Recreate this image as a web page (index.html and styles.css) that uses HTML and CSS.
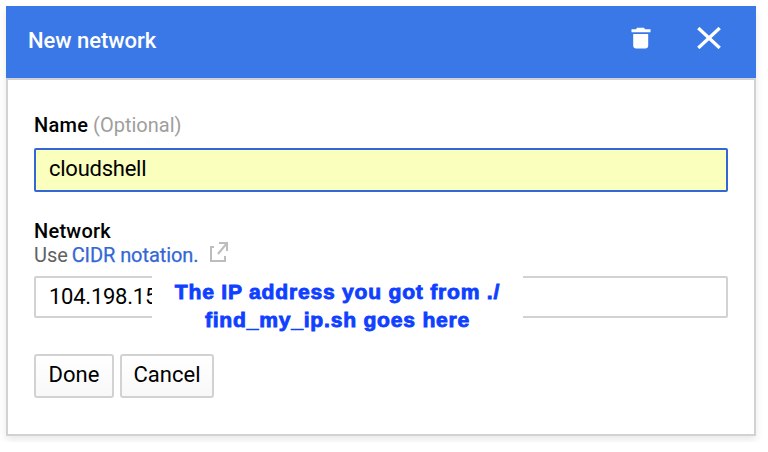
FILE: index.html
```html
<!DOCTYPE html>
<html lang="en">
<head>
<meta charset="utf-8">
<title>New network</title>
<link rel="stylesheet" href="styles.css">
</head>
<body>
<section class="dialog">
  <header class="header">
    <h1 class="title"><span>New network</span></h1>
    <button class="icon-button" aria-label="Delete">
      <svg width="20" height="22" viewBox="0 0 20 22" fill="#fff"><path d="M.5 2.3H5L6 .8h7l1 1.5h5.5v3H.5zM2.2 7h15v11.5a3 3 0 0 1-3 3h-9a3 3 0 0 1-3-3z"/></svg>
    </button>
    <button class="icon-button close" aria-label="Close">
      <svg width="24" height="22" viewBox="0 0 24 22" fill="none" stroke="#fff" stroke-width="3.4"><path d="M1.3 1.1l21.4 19.8M22.7 1.1L1.3 20.9"/></svg>
    </button>
  </header>
  <form class="body">
    <div class="label name-label"><b>Name</b> <span class="optional">(Optional)</span></div>
    <div class="field focused"><span class="value">cloudshell</span></div>
    <div class="label network-label"><b>Network</b></div>
    <div class="hint"><span class="use">Use</span> <a class="link">CIDR notation.</a>
      <svg class="external" width="20" height="21" viewBox="0 0 20 21" fill="none" stroke="#bdbdbd" stroke-width="2"><path d="M5 5H2v14h14v-5M10 1h8v8M18 1L9 12"/></svg>
    </div>
    <div class="field"><span class="ip">104.198.15</span>
      <p class="note"><span class="note-line">The IP address you got from ./</span><span class="note-line">find_my_ip.sh goes here</span></p>
    </div>
    <div class="actions">
      <button type="button" class="button done"><span>Done</span></button>
      <button type="button" class="button cancel"><span>Cancel</span></button>
    </div>
  </form>
</section>
</body>
</html>
```
FILE: styles.css
```css
* { box-sizing: border-box; }
body { margin: 0; padding: 6px; background: #fff; font-family: Roboto, "Liberation Sans", sans-serif; color: #000; }
.dialog { width: 750px; height: 430px; box-shadow: 0 4px 8px rgba(0,0,0,.09); }
.header { height: 72px; padding: 0 35px 0 22px; background: #3b78e7; display: flex; align-items: center; }
.title { flex: 1; margin: 0; color: #fff; font-size: 22px; line-height: 26px; font-weight: 500; padding-bottom: 3px; letter-spacing: -.05px; }
.icon-button { border: 0; padding: 0; background: none; display: flex; margin-bottom: 8px; margin-left: 46px; }
.icon-button svg { display: block; }
.body { height: 358px; border: 2px solid #d2d2d2; background: #fff; padding: 32px 26px 0; }
.label { font-size: 20px; line-height: 26px; white-space: nowrap; }
.label b { font-weight: 500; letter-spacing: .25px; }
.name-label { margin-bottom: 10px; }
.optional { color: #9e9e9e; }
.field { position: relative; height: 42px; border: 2px solid #d2d2d2; border-radius: 2px; padding: 6px 13px; font-size: 22px; line-height: 26px; letter-spacing: -.25px; }
.focused { height: 44px; border-color: #3367d6; background: #faffbd; }
.network-label { margin-top: 26px; }
.hint { display: flex; align-items: center; height: 24px; margin-bottom: 8px; font-size: 20px; line-height: 22px; white-space: nowrap; letter-spacing: -.08px; }
.hint span, .hint a { position: relative; top: -1px; }
.use { color: #616161; margin-right: 4px; }
.link { color: #3367d6; -webkit-text-stroke: .25px #3367d6; }
.external { margin: -7px 0 0 11px; }
.note { position: absolute; left: 116px; top: -3px; width: 371px; height: 66px; margin: 0; padding-top: 3px; background: #fff; color: #0f3fff; text-align: center; font: bold 19px/28px "Liberation Sans", Arial, sans-serif; letter-spacing: .7px; -webkit-text-stroke: .8px #0f3fff; }
.note-line { display: block; white-space: nowrap; transform: translateY(.4px) scale(1.11, 1.02); }
.actions { display: flex; gap: 6px; margin-top: 36px; }
.button { height: 44px; border: 2px solid #d2d2d2; border-radius: 3px; padding: 0 0 3px; background: linear-gradient(#fff, #f8f8f8); color: #000; font: 22px/26px Roboto, sans-serif; }
.done { width: 80px; }
.cancel { width: 94px; }
```
